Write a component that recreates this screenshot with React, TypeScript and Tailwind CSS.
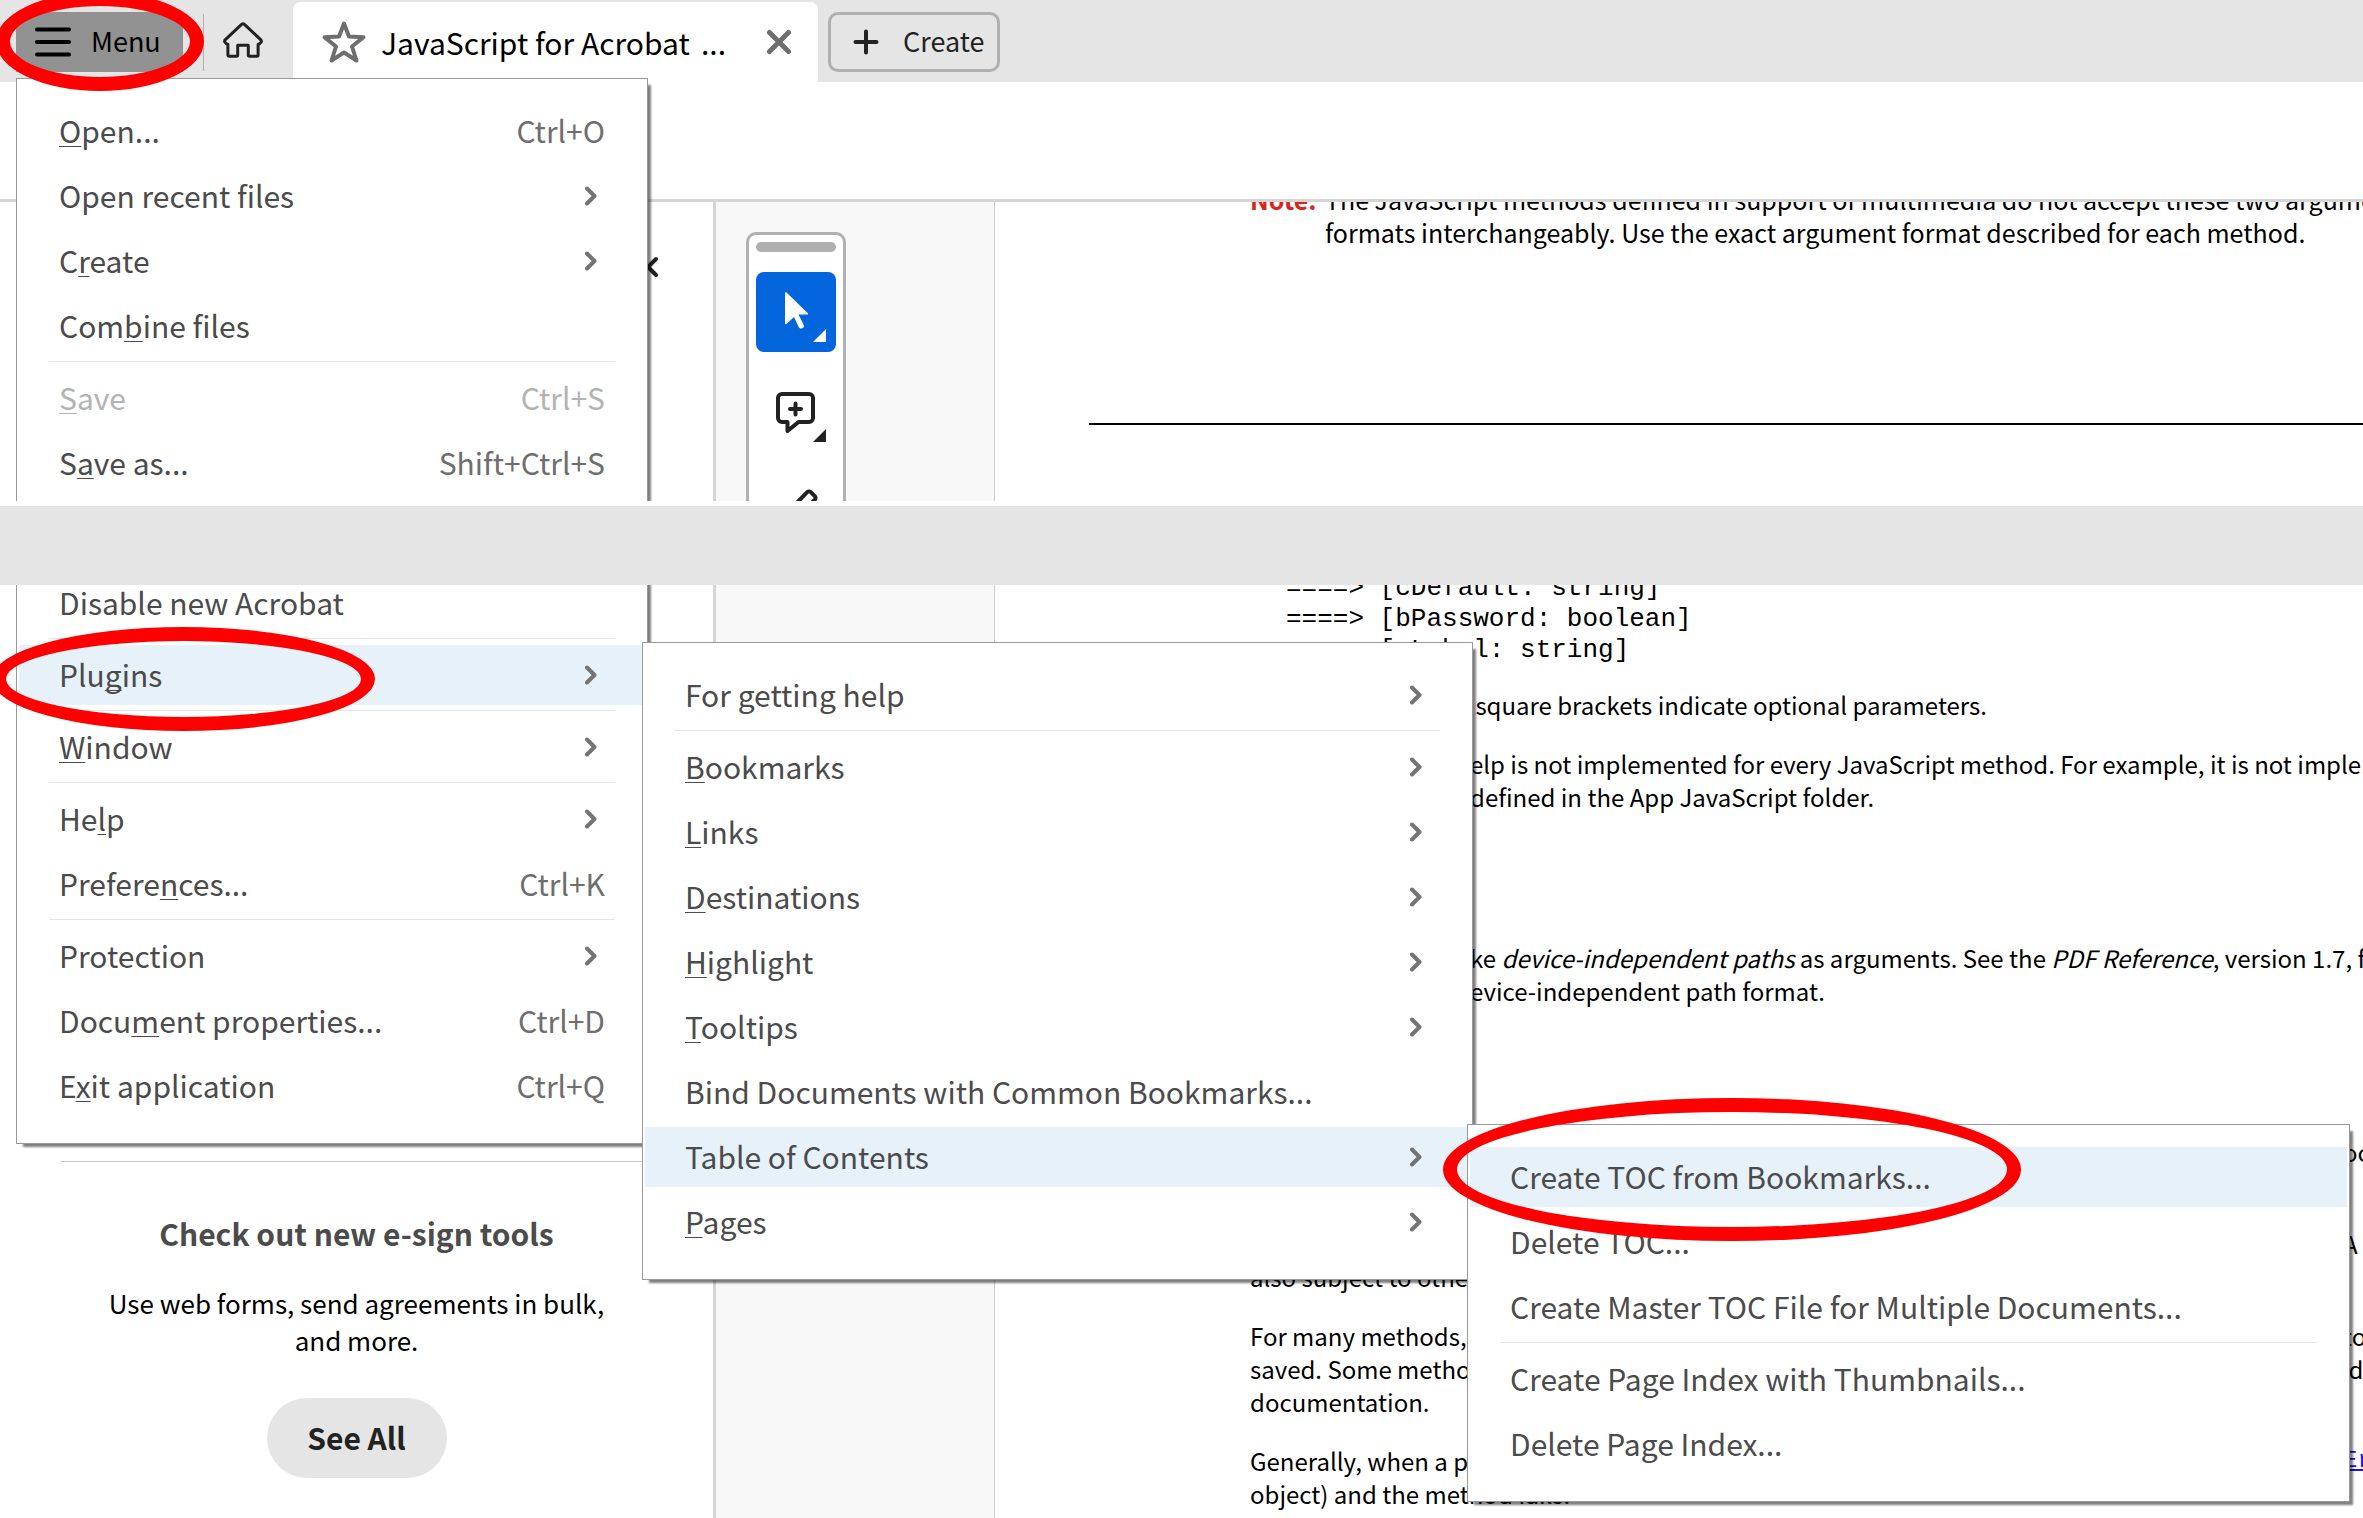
import type { ReactNode } from "react";

type Item = {
  // "_" goes in front of the access key
  label: string;
  shortcut?: string;
  sub?: boolean;
  active?: boolean;
  disabled?: boolean;
};

type Entry = Item | "-";

const fileMenu: Entry[] = [
  { label: "_Open...", shortcut: "Ctrl+O" },
  { label: "Open recent f_iles", sub: true },
  { label: "C_reate", sub: true },
  { label: "Com_bine files" },
  "-",
  { label: "_Save", shortcut: "Ctrl+S", disabled: true },
  { label: "S_ave as...", shortcut: "Shift+Ctrl+S" },
];

const fileMenuEnd: Entry[] = [
  { label: "Disable new Acrobat" },
  "-",
  { label: "Plu_gins", sub: true, active: true },
  "-",
  { label: "_Window", sub: true },
  "-",
  { label: "He_lp", sub: true },
  { label: "Prefere_nces...", shortcut: "Ctrl+K" },
  "-",
  { label: "Protection", sub: true },
  { label: "Docu_ment properties...", shortcut: "Ctrl+D" },
  { label: "E_xit application", shortcut: "Ctrl+Q" },
];

const pluginsMenu: Entry[] = [
  { label: "For getting help", sub: true },
  "-",
  { label: "_Bookmarks", sub: true },
  { label: "_Links", sub: true },
  { label: "_Destinations", sub: true },
  { label: "_Highlight", sub: true },
  { label: "_Tooltips", sub: true },
  { label: "Bind Documents with Common Bookmarks..." },
  { label: "Table of Contents", sub: true, active: true },
  { label: "_Pages", sub: true },
];

const tocMenu: Entry[] = [
  { label: "Create TOC from Bookmarks...", active: true },
  { label: "Delete TOC..." },
  { label: "Create Master TOC File for Multiple Documents..." },
  "-",
  { label: "Create Page Index with Thumbnails..." },
  { label: "Delete Page Index..." },
];

function Label({ text }: { text: string }) {
  const at = text.indexOf("_");
  if (at < 0) return <span className="pb-0.5">{text}</span>;

  return (
    <span className="pb-0.5 whitespace-pre">
      {at > 0 && text.slice(0, at)}
      <u className="decoration-1 underline-offset-3 [text-decoration-skip-ink:none]">
        {text[at + 1]}
      </u>
      {text.slice(at + 2)}
    </span>
  );
}

function MenuList({ items, className }: { items: Entry[]; className: string }) {
  return (
    <ul
      className={`absolute flex flex-col border border-[#999999] bg-white px-0.5 pb-[22px] text-[30px] text-[#4b4b4b] shadow-[5px_5px_2px_-2px_rgba(0,0,0,0.5)] ${className}`}
    >
      {items.map((item, i) =>
        item === "-" ? (
          <li key={i} className="mx-[30px] mb-1.5 h-px bg-[#e6e6e6]" />
        ) : (
          <li key={i} className="mb-[5px]">
            <button
              disabled={item.disabled}
              className={`flex h-[60px] w-full items-center justify-between px-10 text-left whitespace-nowrap disabled:text-[#b3b3b3] ${
                item.active ? "bg-[#e6f1fa]" : ""
              }`}
            >
              <Label text={item.label} />
              {item.shortcut && (
                <span className={item.disabled ? "pb-0.5" : "pb-0.5 text-[#6e6e6e]"}>
                  {item.shortcut}
                </span>
              )}
              {item.sub && (
                <svg
                  viewBox="0 0 14 20"
                  className="mr-[7px] h-5 w-3.5 fill-none stroke-[#747474] stroke-4"
                  strokeLinejoin="round"
                  strokeLinecap="round"
                >
                  <path d="M3 2.5 10.5 10 3 17.5" />
                </svg>
              )}
            </button>
          </li>
        )
      )}
    </ul>
  );
}

function Ring({ className }: { className: string }) {
  return (
    <div
      className={`pointer-events-none absolute rounded-[50%] border-14 border-[#ff0000] ${className}`}
    />
  );
}

function TopBar() {
  return (
    <header className="flex h-[82px] shrink-0 items-start bg-[#e5e5e5] pl-4">
      <button className="mt-3 flex h-[60px] w-[167px] items-center bg-[#929292] pl-[19px] text-[27px] text-black">
        <svg
          viewBox="0 0 36 30"
          className="mr-5 h-[30px] w-9 stroke-black stroke-4"
          strokeLinecap="round"
        >
          <path d="M2 2.5h32M2 15h32M2 27.5h32" />
        </svg>
        <span className="pb-0.5">Menu</span>
      </button>
      <div className="mt-3.5 ml-5 h-[57px] w-px bg-[#b0b0b0]" />
      <button aria-label="Home" className="mt-[22px] ml-[19px]">
        <svg
          viewBox="0 0 40 36"
          className="h-9 w-10 fill-none stroke-[#222222] stroke-3"
          strokeLinejoin="round"
        >
          <path d="M18.6 2.4a2 2 0 0 1 2.8 0L37.6 17.6a2.2 2.2 0 0 1 0 3.1l-1.6 1.6h-.9V33a1.2 1.2 0 0 1-1.2 1.2h-7.4a1.2 1.2 0 0 1-1.2-1.2v-9.8h-10.6V33a1.2 1.2 0 0 1-1.2 1.2H6.1A1.2 1.2 0 0 1 4.9 33V22.3H4l-1.6-1.6a2.2 2.2 0 0 1 0-3.1Z" />
        </svg>
      </button>
      <div className="mt-0.5 ml-[30px] flex h-20 w-[525px] items-center rounded-t-lg bg-white pl-7 text-[30px] text-black">
        <svg
          viewBox="0 0 46 44"
          className="mr-3.5 h-11 w-[46px] fill-none stroke-[#6e6e6e] stroke-4"
          strokeLinejoin="round"
        >
          <path d="M23 3.5 28 16.5 42.5 17.2 31 26.5 35.5 40.5 23 32.5 10.5 40.5 15 26.5 3.5 17.2 18 16.5Z" />
        </svg>
        <span className="w-[320px] shrink-0 whitespace-nowrap">JavaScript for Acrobat</span>
        <span>...</span>
        <button aria-label="Close tab" className="mr-6.5 ml-auto">
          <svg
            viewBox="0 0 26 26"
            className="size-[26px] stroke-[#6e6e6e] stroke-5"
            strokeLinecap="round"
          >
            <path d="m3.5 3.5 19 19M22.5 3.5l-19 19" />
          </svg>
        </button>
      </div>
      <button className="mt-3 ml-2.5 flex h-[60px] w-[172px] items-center rounded-[10px] border-3 border-[#b0b0b0] pl-[22px] text-[27px] text-[#222222]">
        <svg
          viewBox="0 0 26 26"
          className="mr-6 size-[26px] stroke-[#222222] stroke-4"
          strokeLinecap="round"
        >
          <path d="M13 2.5v21M2.5 13h21" />
        </svg>
        <span className="pb-0.5">Create</span>
      </button>
    </header>
  );
}

function QuickTools() {
  return (
    <div className="mt-[30px] ml-[30px] flex w-[100px] flex-col items-center gap-5 rounded-t-[10px] border-3 border-b-0 border-[#b0b0b0] bg-white pt-[7px]">
      <div className="h-2.5 w-20 rounded-full bg-[#b0b0b0]" />
      <button aria-label="Select" className="size-20 rounded-lg bg-[#0265dc]">
        <svg viewBox="0 0 80 80" className="size-20 fill-white">
          <path d="M29 21.5c0-1.2 1-1.6 1.8-.8l21 20.5c.6.6.3 1.3-.6 1.3h-8.7l5.2 10.5c1.3 3-3.3 5-4.9 2.2l-4.8-10.2-7.5 7c-.8.7-1.5.3-1.5-.6Z" />
          <path d="M70 57v13H57Z" />
        </svg>
      </button>
      <button aria-label="Add comment" className="size-20">
        <svg
          viewBox="0 0 80 80"
          className="size-20 fill-none stroke-[#222222] stroke-4"
          strokeLinejoin="round"
          strokeLinecap="round"
        >
          <path d="M26 22h27a4 4 0 0 1 4 4v20a4 4 0 0 1-4 4H42.5L31.5 59v-9H26a4 4 0 0 1-4-4V26a4 4 0 0 1 4-4Z" />
          <path d="M39.5 31.5v11M34 37h11" />
          <path d="M70 57v13H57Z" className="fill-[#222222] stroke-none" />
        </svg>
      </button>
      <button aria-label="Highlight" className="size-20">
        <svg
          viewBox="0 0 80 80"
          className="size-20 fill-none stroke-[#222222] stroke-4"
          strokeLinejoin="round"
        >
          <path d="M23 49 51.2 20.2a2.5 2.5 0 0 1 3.6 0l4 4a2.5 2.5 0 0 1 0 3.6L32 54l-11 4Z" />
        </svg>
      </button>
    </div>
  );
}

// a line whose first words end at the same column as its neighbours
function SplitLine({ lead, children }: { lead: string; children: ReactNode }) {
  return (
    <span className="grid grid-cols-[220px_1fr] whitespace-pre">
      <span className="text-right">{lead}</span>
      <span>{children}</span>
    </span>
  );
}

function WideLine({ text, end }: { text?: string; end?: ReactNode }) {
  return (
    <span className="grid min-h-[33px] grid-cols-[1093px_1fr] whitespace-pre">
      <span>{text}</span>
      <span>{end}</span>
    </span>
  );
}

export default function App() {
  return (
    <div className="flex h-screen flex-col overflow-hidden bg-white font-['Noto_Sans_CJK_SC',sans-serif]">
      <section className="relative flex h-[501px] shrink-0 flex-col overflow-hidden">
        <TopBar />
        <div className="mt-[117px] flex flex-1 border-t-3 border-[#d5d5d5]">
          <aside className="w-[716px] shrink-0 border-r-3 border-[#d5d5d5] pt-[54px]">
            <svg
              viewBox="0 0 14 22"
              className="mr-13.5 ml-auto h-[22px] w-3.5 fill-none stroke-[#222222] stroke-4"
              strokeLinecap="round"
            >
              <path d="M11 3 3 11l8 8" />
            </svg>
          </aside>
          <div className="w-[279px] shrink-0 border-r border-[#cccccc] bg-[#f8f8f8]">
            <QuickTools />
          </div>
          <main className="flex-1 overflow-hidden text-[25px] leading-[33px] whitespace-nowrap text-black">
            <div className="-mt-[19px] grid grid-cols-[75px_1fr] pl-[255px]">
              <b className="text-[#d8261c]">Note:</b>
              <p>
                The JavaScript methods defined in support of multimedia do not accept these two argument
                <br />
                formats interchangeably. Use the exact argument format described for each method.
              </p>
            </div>
            <hr className="mt-[174px] ml-[94px] border-t-2 border-black" />
          </main>
        </div>
        <MenuList items={fileMenu} className="top-[78px] left-4 w-[632px] pt-[22px]" />
        <Ring className="-top-2 -left-1 h-[99px] w-52" />
      </section>

      <div className="mt-[5px] h-[79px] shrink-0 bg-[#e5e5e5]" />

      <section className="relative flex flex-1 overflow-hidden">
        <aside className="flex w-[716px] shrink-0 flex-col items-center border-r-3 border-[#d5d5d5] pt-[576px] text-center">
          <hr className="w-[591px] border-[#c8c8c8]" />
          <h2 className="mt-[51px] text-[30px] leading-[40px] font-bold text-[#4b4b4b]">
            Check out new e-sign tools
          </h2>
          <p className="mt-[31px] w-[510px] text-[26px] leading-[37px] text-black">
            Use web forms, send agreements in bulk, and more.
          </p>
          <button className="mt-10 h-20 w-[180px] rounded-full bg-[#e5e5e5] pb-0.5 text-[30px] font-bold text-[#222222]">
            See All
          </button>
        </aside>
        <div className="w-[279px] shrink-0 border-r border-[#cccccc] bg-[#f8f8f8]" />
        <main className="flex-1 overflow-hidden pl-[255px] text-[24px] leading-[33px] whitespace-nowrap text-black">
          <pre className="-mt-3 pl-9 font-['Liberation_Mono',monospace] text-[26px] leading-[31px]">
            {"====> [cDefault: string]\n====> [bPassword: boolean]\n====> [cLabel: string]"}
          </pre>
          <p className="mt-[22px]">
            <SplitLine lead="Parameters in"> square brackets indicate optional parameters.</SplitLine>
          </p>
          <p className="mt-[26px]">
            <SplitLine lead="Note: H">
              elp is not implemented for every JavaScript method. For example, it is not implemented
            </SplitLine>
            <SplitLine lead="for methods ">defined in the App JavaScript folder.</SplitLine>
          </p>
          <p className="mt-32">
            <SplitLine lead="Some methods ta">
              ke <i>device-independent paths</i> as arguments. See the <i>PDF Reference</i>, version 1.7, for
            </SplitLine>
            <SplitLine lead="about the d">evice-independent path format.</SplitLine>
          </p>
          <p className="mt-32">
            <WideLine end="oc" />
            <WideLine />
          </p>
          <p className="mt-[26px]">
            <WideLine end="A" />
            <WideLine text="also subject to other" />
          </p>
          <p className="mt-[26px]">
            <WideLine text="For many methods," end="to" />
            <WideLine text="saved. Some methods" end=" d" />
            <WideLine text="documentation." />
          </p>
          <p className="mt-[26px]">
            <WideLine
              text="Generally, when a p"
              end={
                <a
                  href="#error"
                  className="block font-['Liberation_Mono',monospace] text-[#1a0dff] underline"
                >
                  Error
                </a>
              }
            />
            <WideLine text="object) and the method fails." />
          </p>
        </main>

        <MenuList items={fileMenuEnd} className="-top-3 left-4 w-[632px] border-t-0" />
        <MenuList items={pluginsMenu} className="top-[57px] left-[642px] w-[831px] pt-[22px]" />
        <MenuList items={tocMenu} className="top-[539px] left-[1467px] w-[883px] pt-[22px]" />
        <Ring className="top-[42px] -left-2 h-[104px] w-[383px]" />
        <Ring className="top-[513px] left-[1443px] h-[143px] w-[578px]" />
      </section>
    </div>
  );
}
